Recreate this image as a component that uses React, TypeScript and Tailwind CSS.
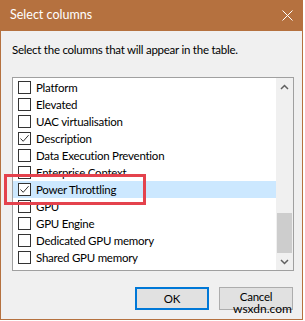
import { ReactElement } from 'react';

const rows = [
  { label: 'Platform', checked: false },
  { label: 'Elevated', checked: false },
  { label: 'UAC virtualisation', checked: false },
  { label: 'Description', checked: true },
  { label: 'Data Execution Prevention', checked: false },
  { label: 'Enterprise Context', checked: false },
  { label: 'Power Throttling', checked: true, selected: true },
  { label: 'GPU', checked: false },
  { label: 'GPU Engine', checked: false },
  { label: 'Dedicated GPU memory', checked: false },
  { label: 'Shared GPU memory', checked: false },
];

function Checkbox({ checked }: { checked: boolean }): ReactElement {
  return (
    <span className="flex h-[13px] w-[13px] shrink-0 items-center justify-center border border-[#333333] bg-white">
      {checked && (
        <svg width="11" height="11" viewBox="0 0 11 11">
          <path d="M1.5 5.5 L4.2 8.3 L9.6 2.2" fill="none" stroke="#333" strokeWidth="1" />
        </svg>
      )}
    </span>
  );
}

export default function App() {
  return (
    <div className="h-[321px] w-[305px] bg-white font-['Lato','Liberation_Sans',sans-serif] text-[11.5px] tracking-[-0.25px] text-black">
      <div className="relative flex h-[320px] w-[303px] flex-col border border-t-0 border-[#b5713f] bg-[#f0f0f0]">
        <header className="-mx-px flex h-[31px] shrink-0 items-center justify-between bg-[#b5713f] pl-[10px] pr-[10px] text-white">
          <span className="text-[12.5px] tracking-normal">Select columns</span>
          <svg width="11" height="11" viewBox="0 0 11 11">
            <path d="M0.5 0.5 L10.5 10.5 M10.5 0.5 L0.5 10.5" stroke="white" strokeWidth="1" />
          </svg>
        </header>

        <p className="ml-[11px] mt-[12px] leading-[14px]">Select the columns that will appear in the table.</p>

        <div className="ml-[11px] mt-[20px] flex h-[194px] w-[282px] border border-[#a0a0a0] bg-white">
          <ul className="flex-1 pt-px">
            {rows.map((row) => (
              <li
                key={row.label}
                className={`flex h-[17px] items-center gap-[5px] pl-[5px] ${row.selected ? 'bg-[#cce8ff]' : ''}`}
              >
                <Checkbox checked={row.checked} />
                <span className="leading-[17px]">{row.label}</span>
              </li>
            ))}
          </ul>
          <div className="flex w-[17px] flex-col bg-[#f0f0f0]">
            <div className="flex h-[17px] items-center justify-center">
              <svg width="9" height="6" viewBox="0 0 9 6">
                <path d="M1 5 L4.5 1.5 L8 5" fill="none" stroke="#606060" strokeWidth="1.5" />
              </svg>
            </div>
            <div className="flex-1" />
            <div className="mx-px h-[40px] bg-[#cdcdcd]" />
            <div className="flex h-[17px] items-center justify-center">
              <svg width="9" height="6" viewBox="0 0 9 6">
                <path d="M1 1 L4.5 4.5 L8 1" fill="none" stroke="#606060" strokeWidth="1.5" />
              </svg>
            </div>
          </div>
        </div>

        <div className="mr-[9px] mt-[16px] flex justify-end gap-[10px]">
          <button className="h-[23px] w-[74px] border-2 border-[#0078d7] bg-[#e1e1e1]">OK</button>
          <button className="h-[23px] w-[74px] border border-[#adadad] bg-[#e1e1e1] pb-[4px] leading-[14px]">Cancel</button>
        </div>

        <div className="absolute left-[3px] top-[174px] h-[31px] w-[142px] border-[3px] border-[#e4424d]" />
        <span className="absolute left-[232px] top-[303px] text-[12px] leading-[12px] tracking-normal text-black">wsxdn.com</span>
      </div>
    </div>
  );
}
